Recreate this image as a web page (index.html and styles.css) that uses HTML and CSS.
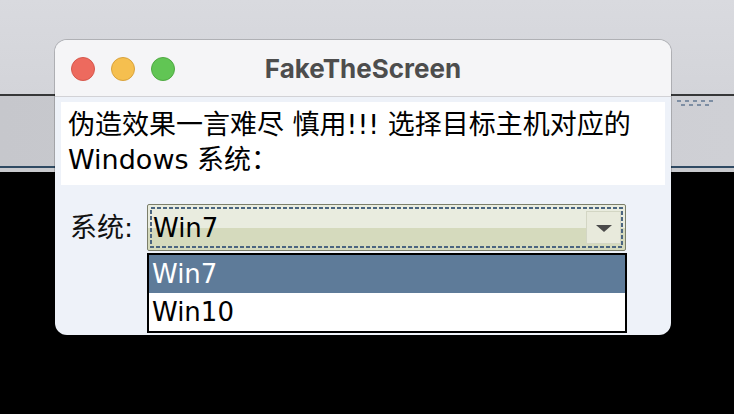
FILE: index.html
```html
<!DOCTYPE html>
<html lang="zh">
<head>
<meta charset="utf-8">
<title>FakeTheScreen</title>
<link rel="stylesheet" href="styles.css">
</head>
<body>
<div class="desktop">
  <div class="band-top"></div>
  <div class="rule-dark"></div>
  <div class="band-mid">
    <div class="dots">
      <div class="dots-row"><i></i><i></i><i></i><i></i><i></i></div>
      <div class="dots-row shifted"><i></i><i></i><i></i><i></i></div>
    </div>
  </div>
  <div class="rule-blue"></div>
  <div class="band-low"></div>
</div>

<div class="window">
  <div class="titlebar">
    <div class="lights">
      <span class="light red"></span>
      <span class="light yellow"></span>
      <span class="light green"></span>
    </div>
    <div class="title">FakeTheScreen</div>
    <div></div>
  </div>
  <div class="content">
    <div class="notice">伪造效果一言难尽 慎用!!! 选择目标主机对应的<br>Windows 系统：</div>
    <div class="row">
      <div class="label">系统:</div>
      <div class="picker">
        <div class="combo">
          <span class="combo-text">Win7</span>
          <span class="combo-btn"><span class="arrow"></span></span>
          <svg class="focus" width="477" height="45" viewBox="0 0 477 45"><rect x="3" y="3" width="471" height="39" fill="none" stroke="#4b6580" stroke-width="2" stroke-dasharray="4 2"/></svg>
        </div>
        <div class="list">
          <div class="item selected">Win7</div>
          <div class="item">Win10</div>
        </div>
      </div>
    </div>
  </div>
</div>
</body>
</html>
```

FILE: styles.css
```css
html, body {
  margin: 0;
  padding: 0;
}
body {
  width: 734px;
  height: 414px;
  overflow: hidden;
  background: #000;
  position: relative;
  font-family: "DejaVu Sans", "Noto Sans CJK SC", sans-serif;
}
.desktop {
  width: 734px;
}
.band-top {
  height: 94px;
  background: linear-gradient(180deg, #d9dadf 0%, #d3d4d9 100%);
}
.rule-dark {
  height: 2px;
  background: #363738;
}
.band-mid {
  height: 70px;
  background: linear-gradient(90deg, #c6c7cc 0%, #cfd0d5 100%);
  display: flex;
  justify-content: flex-end;
}
.dots {
  width: 57px;
  padding-top: 4px;
  display: flex;
  flex-direction: column;
  gap: 2px;
}
.dots-row {
  display: flex;
  gap: 4px;
}
.dots-row.shifted {
  padding-left: 4px;
}
.dots-row i {
  width: 4px;
  height: 2px;
  background: #7d8ea3;
}
.rule-blue {
  height: 2px;
  background: #2f4a63;
}
.band-low {
  height: 4px;
  background: #c9cace;
}

.window {
  position: absolute;
  left: 55px;
  top: 40px;
  width: 616px;
  height: 295px;
  border-radius: 12px;
  overflow: hidden;
  background: #eef2f9;
  box-shadow: 0 0 0 1px rgba(0, 0, 0, 0.18);
}
.titlebar {
  height: 56px;
  background: #f5f5f7;
  border-bottom: 1px solid #d2d2d6;
  display: grid;
  grid-template-columns: 1fr auto 1fr;
  align-items: center;
}
.lights {
  display: flex;
  gap: 16px;
  padding-left: 16px;
  padding-top: 1px;
}
.light {
  width: 24px;
  height: 24px;
  border-radius: 50%;
  box-sizing: border-box;
}
.red { background: #ed6a5e; border: 1px solid #d6574c; }
.yellow { background: #f5bf4f; border: 1px solid #d9a23c; }
.green { background: #61c554; border: 1px solid #4fa942; }
.title {
  font-family: "Inter", "Liberation Sans", sans-serif;
  font-weight: 700;
  font-size: 26px;
  color: #4d4d4d;
  padding-top: 1px;
}

.content {
  padding: 5px 6px 0 6px;
}
.notice {
  background: #fff;
  padding: 5px 7px 8px 7px;
  font-size: 27px;
  line-height: 35px;
  color: #000;
  white-space: nowrap;
}
.row {
  display: flex;
  align-items: flex-start;
  padding-top: 19px;
}
.label {
  width: 77px;
  padding-left: 9px;
  font-size: 27px;
  line-height: 47px;
  color: #111;
}
.picker {
  display: flex;
  flex-direction: column;
  gap: 2px;
}
.combo {
  position: relative;
  width: 479px;
  height: 47px;
  box-sizing: border-box;
  border: 1px solid #7b7e6a;
  border-radius: 2px;
  background: linear-gradient(180deg, #e9ecdf 0%, #e9ecdf 50%, #d5dabd 50%, #d5dabd 100%);
  display: flex;
  align-items: center;
  justify-content: space-between;
  padding: 0 4px 0 5px;
}
.combo-text {
  font-size: 26px;
  color: #000;
  padding-top: 1px;
}
.combo-btn {
  width: 35px;
  height: 33px;
  box-sizing: border-box;
  background: #e8eadc;
  border: 1px solid #d3d6c4;
  display: flex;
  align-items: center;
  justify-content: center;
}
.arrow {
  width: 0;
  height: 0;
  border-left: 8px solid transparent;
  border-right: 8px solid transparent;
  border-top: 7px solid #4a4a4a;
  margin-top: 1px;
}
.focus {
  position: absolute;
  left: 0;
  top: 0;
}
.list {
  width: 480px;
  height: 80px;
  box-sizing: border-box;
  border: 2px solid #000;
  background: #fff;
}
.item {
  height: 38px;
  line-height: 38px;
  padding-left: 3px;
  font-size: 26px;
  color: #000;
}
.item.selected {
  background: #5e7b99;
  color: #fff;
}
```
